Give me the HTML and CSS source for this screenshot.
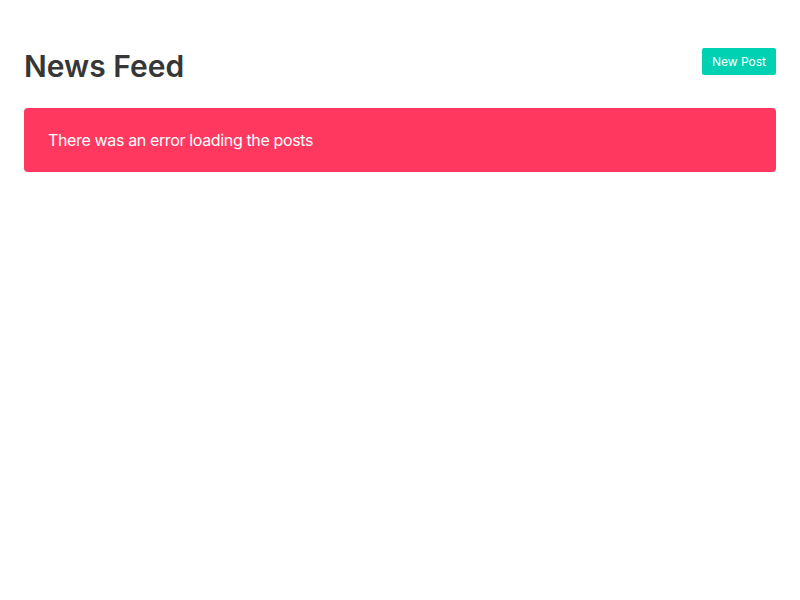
FILE: index.html
```html
<!DOCTYPE html>
<html>
<head>
<meta charset="utf-8">
<link rel="stylesheet" href="styles.css">
</head>
<body>
<section class="page">
  <header class="header">
    <h1 class="title">News Feed</h1>
    <button class="btn">New Post</button>
  </header>
  <div class="notification">There was an error loading the posts</div>
</section>
</body>
</html>
```
FILE: styles.css
```css
html, body {
  margin: 0;
  padding: 0;
  background: #fff;
  font-family: Inter, "Noto Sans", sans-serif;
  color: #4a4a4a;
}
.page {
  padding: 48px 24px;
}
.header {
  display: flex;
  justify-content: space-between;
  align-items: flex-start;
  margin-bottom: 24px;
}
.title {
  margin: 0;
  font-size: 30px;
  line-height: 36px;
  font-weight: 600;
  color: #363636;
  letter-spacing: 0;
}
.btn {
  background: #00d1b2;
  color: #fff;
  border: none;
  border-radius: 2px;
  font-family: inherit;
  font-size: 12px;
  height: 27px;
  padding: 0 10px;
  line-height: 27px;
}
.notification {
  background: #ff3860;
  color: #fff;
  border-radius: 4px;
  padding: 20px 40px 20px 24px;
  font-size: 16px;
  line-height: 24px;
  letter-spacing: -0.36px;
}
```
